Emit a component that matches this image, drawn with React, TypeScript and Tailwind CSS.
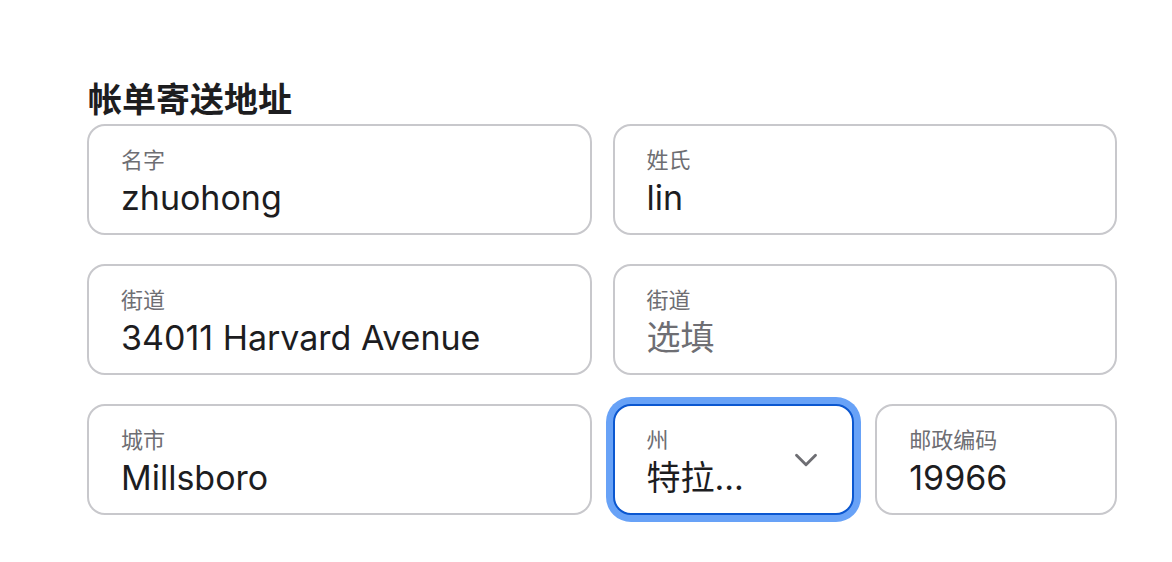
import { ChevronDown } from 'lucide-react'

const font = { fontFamily: 'Inter, "Noto Sans CJK SC", sans-serif' }

function Field({ label, value, placeholder }: { label: string; value?: string; placeholder?: string }) {
  return (
    <div className="h-[111px] rounded-[18px] border-2 border-[#c8c8cc] bg-white pl-[32px] pr-4 pt-[19px]">
      <div className="text-[22px] leading-[30px] text-[#6e6e73]">{label}</div>
      <div className={`mt-[2px] text-[34px] leading-[42px] ${value ? 'text-[#1d1d1f]' : 'text-[#6e6e73]'}`}>
        {value ?? placeholder}
      </div>
    </div>
  )
}

export default function App() {
  return (
    <div className="min-h-[562px] bg-white pl-[87px] pt-[78px]" style={font}>
      <div className="w-[1030px]">
        <h2 className="pl-px text-[34px] font-bold leading-[44px] text-[#1d1d1f]">帐单寄送地址</h2>
        <div className="mt-[2px] flex flex-col gap-[29px]">
          <div className="grid grid-cols-2 gap-[21px]">
            <Field label="名字" value="zhuohong" />
            <Field label="姓氏" value="lin" />
          </div>
          <div className="grid grid-cols-2 gap-[21px]">
            <Field label="街道" value="34011 Harvard Avenue" />
            <Field label="街道" placeholder="选填" />
          </div>
          <div className="grid grid-cols-2 gap-[21px]">
            <Field label="城市" value="Millsboro" />
            <div className="grid grid-cols-2 gap-[21px]">
              <div className="flex h-[111px] items-start rounded-[18px] border-2 border-[#0b57d0] bg-white pl-[32px] pr-[27px] pt-[19px] shadow-[0_0_0_7px_#68a2f7]">
                <div className="flex-1">
                  <div className="text-[22px] leading-[30px] text-[#6e6e73]">州</div>
                  <div className="mt-[2px] text-[34px] leading-[42px] text-[#1d1d1f]">特拉...</div>
                </div>
                <ChevronDown className="mt-[16px] h-[38px] w-[38px] text-[#6e6e73]" strokeWidth={1.8} />
              </div>
              <Field label="邮政编码" value="19966" />
            </div>
          </div>
        </div>
      </div>
    </div>
  )
}
